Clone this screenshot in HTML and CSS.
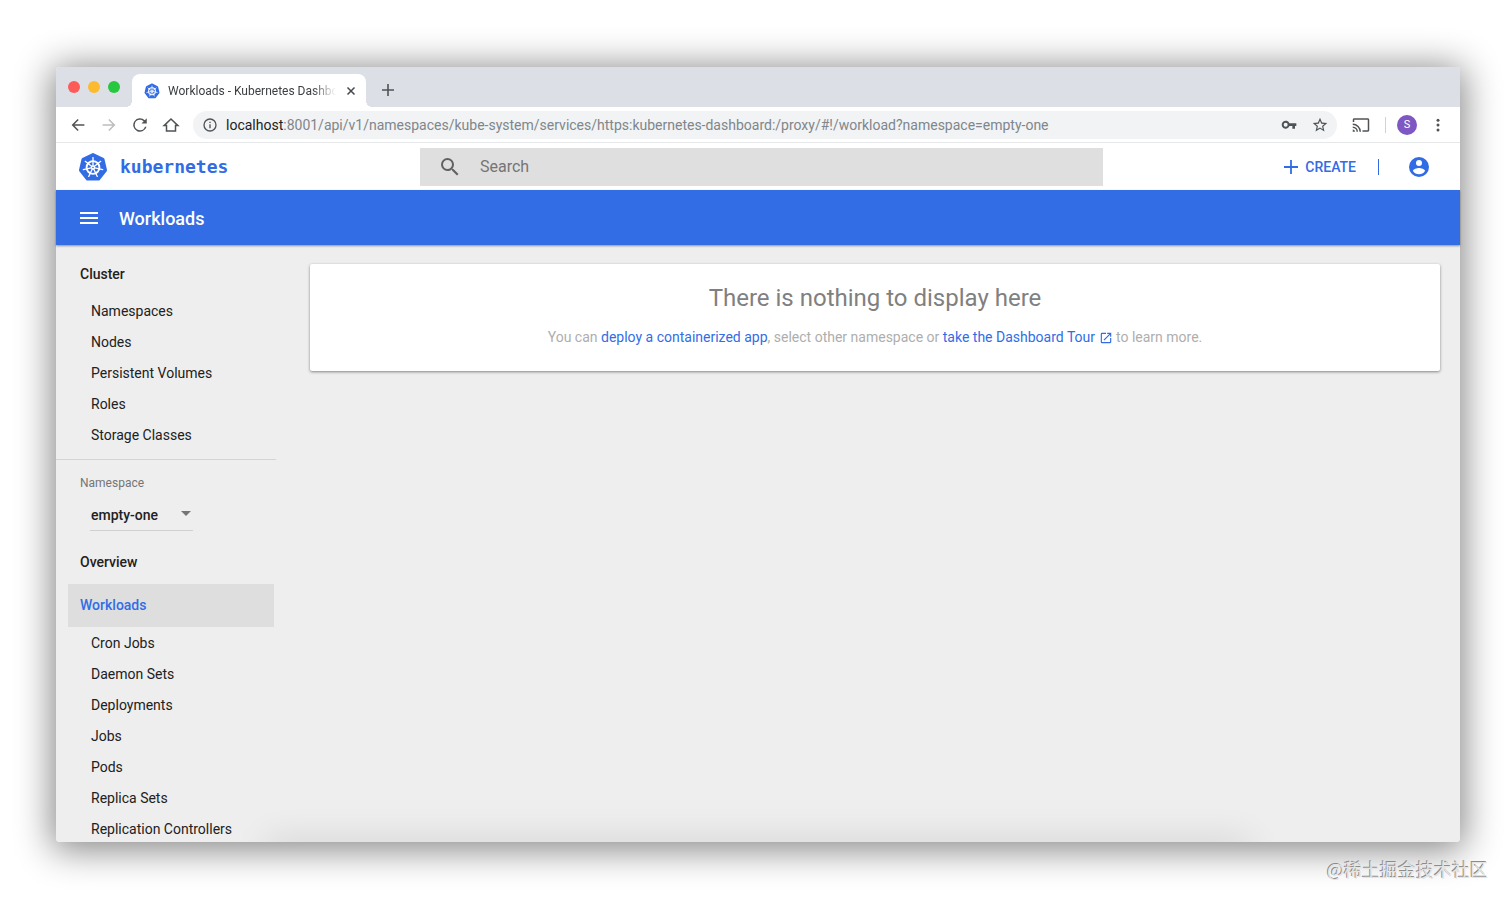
FILE: index.html
```html
<!DOCTYPE html>
<html lang="en">
<head>
    <meta charset="UTF-8">
    <meta name="viewport" content="width=device-width, initial-scale=1.0">
    <title>Workloads - Kubernetes Dashboard</title>
    <link rel="stylesheet" href="styles.css">
</head>
<body>
    <!-- Kubernetes wheel, used in the tab and in the header -->
    <svg class="symbols" aria-hidden="true">
        <symbol id="k8s-logo" viewBox="0 0 30 30">
            <path fill="#326ce5" stroke="#326ce5" stroke-width="3" stroke-linejoin="round" d="M15 2.5 25 7.3 27.5 18.2 20.6 27H9.4L2.5 18.2 5 7.3Z"/>
            <g fill="none" stroke="#fff" stroke-linecap="round">
                <circle cx="15" cy="15.5" r="6.4" stroke-width="1.9"/>
                <g stroke-width="1.3">
                    <path id="spoke" d="M15 13.6V5.6"/>
                    <use href="#spoke" transform="rotate(51.43 15 15.5)"/>
                    <use href="#spoke" transform="rotate(102.86 15 15.5)"/>
                    <use href="#spoke" transform="rotate(154.29 15 15.5)"/>
                    <use href="#spoke" transform="rotate(205.71 15 15.5)"/>
                    <use href="#spoke" transform="rotate(257.14 15 15.5)"/>
                    <use href="#spoke" transform="rotate(308.57 15 15.5)"/>
                </g>
                <circle cx="15" cy="15.5" r="1.5" stroke-width="1.4"/>
            </g>
        </symbol>
    </svg>

    <div class="window">
        <div class="tab-strip">
            <div class="lights">
                <span class="light red"></span>
                <span class="light yellow"></span>
                <span class="light green"></span>
            </div>
            <div class="tab">
                <svg class="favicon"><use href="#k8s-logo"/></svg>
                <span class="tab-title">Workloads - Kubernetes Dashboard</span>
                <button class="icon-button" aria-label="Close tab">
                    <svg width="10" height="10" viewBox="0 0 10 10" fill="none" stroke="#45494d" stroke-width="1.5"><path d="M1.5 1.5l7 7M8.5 1.5l-7 7"/></svg>
                </button>
            </div>
            <button class="icon-button new-tab" aria-label="New tab">
                <svg width="12" height="12" viewBox="0 0 12 12" fill="none" stroke="#505356" stroke-width="1.6"><path d="M6 0v12M0 6h12"/></svg>
            </button>
        </div>

        <div class="toolbar">
            <div class="nav-buttons">
                <button class="icon-button" aria-label="Back">
                    <svg width="18" height="18" viewBox="0 0 24 24" fill="#505356"><path d="M20.500 11H7.330l5.590-5.590L11.500 4l-8 8 8 8 1.410-1.410L7.330 13H20.500v-2z"/></svg>
                </button>
                <button class="icon-button" aria-label="Forward">
                    <svg width="18" height="18" viewBox="0 0 24 24" fill="#bbbdbf"><path d="M12.500 4l-1.410 1.410L16.670 11H3.500v2h13.170l-5.580 5.590L12.500 20l8-8z"/></svg>
                </button>
                <button class="icon-button" aria-label="Reload">
                    <svg width="18" height="18" viewBox="0 0 24 24" fill="#505356"><path d="M18.360 5.640A9 9 0 1 0 20.700 14.300h-2.100A7 7 0 1 1 12 5c1.930 0 3.680.78 4.950 2.050L14 10h7V3l-2.640 2.640z"/></svg>
                </button>
                <button class="icon-button" aria-label="Home">
                    <svg width="18" height="18" viewBox="0 0 24 24" fill="none" stroke="#505356" stroke-width="2"><path d="M2.800 12.800H6V20h12v-7.200h3.200L12 4Z"/></svg>
                </button>
            </div>
            <div class="address">
                <svg width="16" height="16" viewBox="0 0 24 24" fill="#505356"><path d="M11 7h2v2h-2zm0 4h2v6h-2zm1-9a10 10 0 1 0 0 20 10 10 0 0 0 0-20zm0 18a8 8 0 1 1 0-16 8 8 0 0 1 0 16z"/></svg>
                <span class="url"><span class="host">localhost</span>:8001/api/v1/namespaces/kube-system/services/https:kubernetes-dashboard:/proxy/#!/workload?namespace=empty-one</span>
                <button class="icon-button" aria-label="Passwords">
                    <svg width="16" height="16" viewBox="0 0 24 24" fill="#505356"><path fill-rule="evenodd" d="M12.650 9.500A6 6 0 1 0 12.650 13.500H17v4h4v-4h2v-4zM7 14.500a3 3 0 1 1 0-6 3 3 0 0 1 0 6z"/></svg>
                </button>
                <button class="icon-button" aria-label="Bookmark">
                    <svg width="16" height="16" viewBox="1 1 22 22" fill="#505356"><path d="M22 9.240l-7.190-.62L12 2 9.190 8.630 2 9.240l5.460 4.730L5.820 21 12 17.270 18.180 21l-1.630-7.030L22 9.240zM12 15.400l-3.760 2.270 1-4.280-3.320-2.880 4.380-.38L12 6.100l1.710 4.040 4.380.38-3.320 2.880 1 4.280L12 15.400z"/></svg>
                </button>
            </div>
            <button class="icon-button cast" aria-label="Cast">
                <svg width="18" height="18" viewBox="0 0 24 24" fill="#505356"><path d="M21 3H3c-1.100 0-2 .9-2 2v3h2V5h18v14h-7v2h7c1.100 0 2-.9 2-2V5c0-1.100-.9-2-2-2zM1 18v3h3c0-1.660-1.340-3-3-3zm0-4v2a5 5 0 0 1 5 5h2a7 7 0 0 0-7-7zm0-4v2a9 9 0 0 1 9 9h2A11 11 0 0 0 1 10z"/></svg>
            </button>
            <span class="separator"></span>
            <button class="profile" aria-label="Profile">S</button>
            <button class="icon-button" aria-label="Menu">
                <svg width="18" height="18" viewBox="0 0 24 24" fill="#505356"><circle cx="12" cy="5.500" r="2"/><circle cx="12" cy="12" r="2"/><circle cx="12" cy="18.500" r="2"/></svg>
            </button>
        </div>

        <header class="header">
            <a class="brand" href="#">
                <svg class="logo"><use href="#k8s-logo"/></svg>
                <span>kubernetes</span>
            </a>
            <label class="search">
                <svg width="24" height="24" viewBox="0 0 24 24" fill="#616161"><path d="M15.500 14h-.79l-.28-.27A6.470 6.470 0 0 0 16 9.500 6.500 6.500 0 1 0 9.500 16c1.610 0 3.090-.59 4.230-1.570l.27.28v.79l5 4.990L20.490 19l-4.990-5zm-6 0a4.500 4.500 0 1 1 0-9 4.500 4.500 0 0 1 0 9z"/></svg>
                <input type="text" placeholder="Search" aria-label="Search">
            </label>
            <div class="actions">
                <button class="create">
                    <svg width="14" height="14" viewBox="0 0 14 14" fill="none" stroke="#326ce5" stroke-width="1.800"><path d="M7 0v14M0 7h14"/></svg>
                    CREATE
                </button>
                <span class="bar"></span>
                <button class="icon-button" aria-label="Account">
                    <svg width="24" height="24" viewBox="0 0 24 24" fill="#326ce5"><path d="M12 2a10 10 0 1 0 0 20 10 10 0 0 0 0-20zm0 3a3 3 0 1 1 0 6 3 3 0 0 1 0-6zm0 14.200a7.200 7.200 0 0 1-6-3.220c.03-1.990 4-3.080 6-3.080s5.970 1.090 6 3.080a7.200 7.200 0 0 1-6 3.220z"/></svg>
                </button>
            </div>
        </header>

        <div class="title-bar">
            <button class="icon-button" aria-label="Toggle navigation">
                <svg width="18" height="12" viewBox="0 0 18 12" fill="#fff"><path d="M0 0h18v2H0zM0 5h18v2H0zM0 10h18v2H0z"/></svg>
            </button>
            <h1>Workloads</h1>
        </div>

        <div class="page">
            <nav class="sidebar">
                <a class="group" href="#">Cluster</a>
                <a class="item" href="#">Namespaces</a>
                <a class="item" href="#">Nodes</a>
                <a class="item" href="#">Persistent Volumes</a>
                <a class="item" href="#">Roles</a>
                <a class="item" href="#">Storage Classes</a>
                <div class="namespace">
                    <label for="namespace">Namespace</label>
                    <div class="select">
                        <select id="namespace">
                            <option>empty-one</option>
                        </select>
                        <svg width="10" height="5" viewBox="0 0 10 5" fill="#757575"><path d="M0 0h10L5 5z"/></svg>
                    </div>
                </div>
                <a class="group" href="#">Overview</a>
                <a class="group active" href="#">Workloads</a>
                <a class="item" href="#">Cron Jobs</a>
                <a class="item" href="#">Daemon Sets</a>
                <a class="item" href="#">Deployments</a>
                <a class="item" href="#">Jobs</a>
                <a class="item" href="#">Pods</a>
                <a class="item" href="#">Replica Sets</a>
                <a class="item" href="#">Replication Controllers</a>
            </nav>
            <main class="content">
                <section class="card">
                    <h2>There is nothing to display here</h2>
                    <p>You can <a href="#">deploy a containerized app</a>, select other namespace or <a href="#">take the Dashboard Tour <svg width="14" height="14" viewBox="0 0 24 24" fill="#326ce5"><path d="M19 19H5V5h7V3H5a2 2 0 0 0-2 2v14a2 2 0 0 0 2 2h14c1.100 0 2-.9 2-2v-7h-2v7zM14 3v2h3.590l-9.830 9.830 1.410 1.410L19 6.410V10h2V3h-7z"/></svg></a> to learn more.</p>
                </section>
            </main>
        </div>
    </div>
    <div class="watermark" lang="zh">@稀土掘金技术社区</div>
</body>
</html>
```
FILE: styles.css
```css
* {
    margin: 0;
    padding: 0;
    box-sizing: border-box;
}

body {
    height: 100vh;
    padding: 67px 52px 62px 56px;
    background-color: #fff;
    font-family: Roboto, sans-serif;
    font-size: 14px;
    color: #212121;
    overflow: hidden;
}

a {
    color: inherit;
    text-decoration: none;
}

button {
    border: none;
    background: none;
    font-family: inherit;
    cursor: pointer;
}

svg {
    flex-shrink: 0;
}

.symbols {
    position: absolute;
    width: 0;
    height: 0;
}

.icon-button {
    display: flex;
}

.window {
    height: 100%;
    display: flex;
    flex-direction: column;
    border-radius: 4px;
    box-shadow: 0 4px 36px 4px rgba(0, 0, 0, 0.48);
}

/* Browser chrome */
.tab-strip {
    height: 40px;
    flex-shrink: 0;
    display: flex;
    align-items: flex-end;
    background-color: #dcdfe5;
    border-radius: 4px 4px 0 0;
}

.lights {
    height: 40px;
    display: flex;
    align-items: center;
    gap: 8px;
    padding: 0 12px;
}

.light {
    width: 12px;
    height: 12px;
    border-radius: 50%;
}

.red {
    background-color: #fc5b57;
}

.yellow {
    background-color: #fcbb2f;
}

.green {
    background-color: #27c840;
}

.tab {
    position: relative;
    width: 234px;
    height: 33px;
    display: flex;
    align-items: center;
    padding: 0 10px 0 12px;
    background-color: #fff;
    border-radius: 8px 8px 0 0;
}

/* Curved feet of the active tab */
.tab::before,
.tab::after {
    content: "";
    position: absolute;
    bottom: 0;
    width: 6px;
    height: 6px;
}

.tab::before {
    left: -6px;
    background: radial-gradient(circle at top left, transparent 6px, #fff 6px);
}

.tab::after {
    right: -6px;
    background: radial-gradient(circle at top right, transparent 6px, #fff 6px);
}

.favicon {
    width: 16px;
    height: 16px;
    margin-right: 8px;
}

.tab-title {
    flex: 1;
    margin-right: 10px;
    overflow: hidden;
    white-space: nowrap;
    font-size: 12px;
    color: #3c4043;
    mask-image: linear-gradient(to right, #000 86%, transparent);
}

.new-tab {
    margin: 0 0 11px 16px;
}

.toolbar {
    height: 36px;
    flex-shrink: 0;
    display: flex;
    align-items: center;
    padding: 0 13px;
    background-color: #fff;
    border-bottom: 1px solid #e6e7e9;
}

.nav-buttons {
    display: flex;
    gap: 13px;
    margin-right: 13px;
}

.address {
    flex: 1;
    min-width: 0;
    height: 28px;
    display: flex;
    align-items: center;
    gap: 15px;
    padding: 0 9px;
    background-color: #f1f3f4;
    border-radius: 14px;
}

.url {
    flex: 1;
    margin-left: -7px;
    overflow: hidden;
    white-space: nowrap;
    color: #80868b;
}

.host {
    color: #202124;
}

.cast {
    margin: 0 15px;
}

.separator {
    width: 1px;
    height: 16px;
    background-color: #d0d2d5;
}

.profile {
    width: 20px;
    height: 20px;
    margin: 0 12px 0 11px;
    border-radius: 50%;
    background-color: #7e57c2;
    color: #fff;
    font-size: 11px;
}

/* Dashboard header */
.header {
    height: 47px;
    flex-shrink: 0;
    display: flex;
    align-items: center;
    background-color: #fff;
}

.brand {
    width: 364px;
    display: flex;
    align-items: center;
    gap: 12px;
    padding-left: 22px;
    font-family: "DejaVu Sans Mono", monospace;
    font-size: 18px;
    font-weight: bold;
    color: #326ce5;
}

.logo {
    width: 30px;
    height: 30px;
}

.search {
    flex: 1;
    height: 38px;
    display: flex;
    align-items: center;
    gap: 18px;
    padding: 0 18px;
    background-color: #dfdfdf;
}

.search input {
    flex: 1;
    border: none;
    outline: none;
    background: none;
    font-family: inherit;
    font-size: 16px;
}

.search input::placeholder {
    color: #757575;
}

.actions {
    width: 357px;
    display: flex;
    align-items: center;
    justify-content: flex-end;
    padding-right: 29px;
}

.create {
    display: flex;
    align-items: center;
    gap: 7px;
    color: #326ce5;
    font-size: 14px;
    font-weight: 500;
}

.bar {
    width: 1px;
    height: 16px;
    margin: 0 28px 0 22px;
    background-color: #326ce5;
}

.title-bar {
    position: relative;
    z-index: 1;
    height: 55px;
    flex-shrink: 0;
    display: flex;
    align-items: center;
    gap: 21px;
    padding-left: 24px;
    background-color: #326de6;
    box-shadow: 0 1px 2px rgba(0, 0, 0, 0.4);
}

.title-bar h1 {
    padding-top: 2px;
    color: #fff;
    font-size: 18px;
    font-weight: 500;
}

.page {
    position: relative;
    flex: 1;
    min-height: 0;
    display: flex;
    overflow: hidden;
    background-color: #eee;
    border-radius: 0 0 4px 4px;
}

/* Soft shade along the lower edge of the page */
.page::after {
    content: "";
    position: absolute;
    left: 15%;
    right: 15%;
    bottom: -20px;
    height: 20px;
    box-shadow: 0 0 36px rgba(0, 0, 0, 0.14);
}

.sidebar {
    width: 220px;
    flex-shrink: 0;
    padding-top: 8px;
}

.group,
.item {
    display: block;
}

.group {
    margin: 0 2px 0 12px;
    padding-left: 12px;
    line-height: 43px;
    font-weight: 500;
}

.active {
    margin-bottom: 1px;
    background-color: #dedede;
    color: #326de6;
}

.item {
    padding-left: 35px;
    line-height: 31px;
}

.namespace {
    margin-top: 8px;
    padding: 15px 24px 10px;
    border-top: 1px solid #d4d4d4;
}

.namespace label {
    display: block;
    line-height: 16px;
    font-size: 12px;
    color: #757575;
}

.select {
    position: relative;
    width: 103px;
    margin: 9px 0 0 10px;
}

.select select {
    width: 100%;
    height: 31px;
    appearance: none;
    padding-left: 1px;
    border: none;
    border-bottom: 1px solid #d0d0d0;
    background: none;
    font-family: inherit;
    font-size: 14px;
    font-weight: 500;
    color: #212121;
}

.select svg {
    position: absolute;
    top: 11px;
    right: 2px;
    pointer-events: none;
}

.content {
    flex: 1;
    padding: 19px 20px 0 34px;
}

.card {
    padding: 18px 16px 24px;
    background-color: #fff;
    border-radius: 2px;
    box-shadow: 0 1px 3px rgba(0, 0, 0, 0.45);
    text-align: center;
}

.card h2 {
    line-height: 32px;
    font-size: 24px;
    font-weight: 400;
    color: #808080;
}

.card p {
    margin-top: 13px;
    line-height: 20px;
    color: #aeaeae;
}

.card a {
    color: #326de6;
}

.card svg {
    vertical-align: -3px;
}

.watermark {
    position: absolute;
    right: 24px;
    bottom: 22px;
    font-family: "Noto Sans CJK SC", sans-serif;
    font-size: 18px;
    line-height: 26px;
    color: #e4e4e4;
    text-shadow: -1px -1px 0 #8c8c8c;
}
```
